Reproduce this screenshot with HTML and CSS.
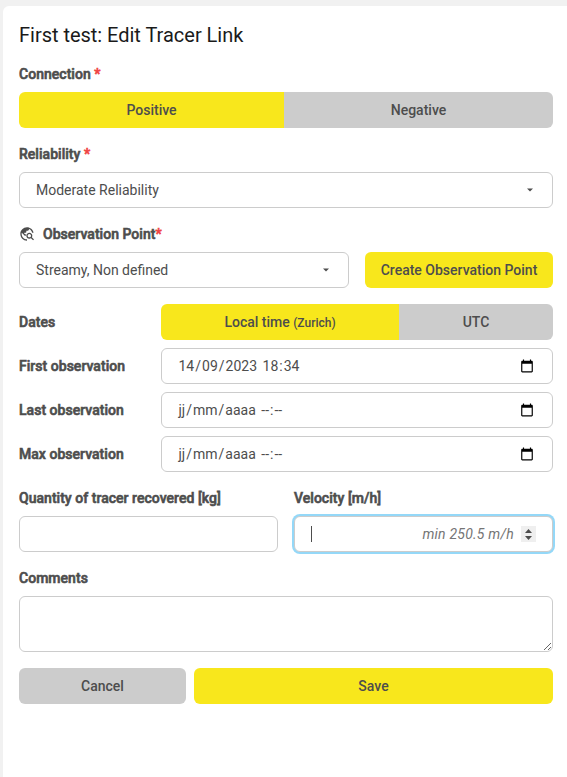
FILE: index.html
```html
<!DOCTYPE html>
<html lang="en">
<head>
<meta charset="utf-8">
<title>Edit Tracer Link</title>
<link rel="stylesheet" href="styles.css">
</head>
<body>
<svg class="sprite" aria-hidden="true">
  <symbol id="caret" viewBox="0 0 6 4"><path d="M0 .5h6L3 3.5z"/></symbol>
  <symbol id="calendar" viewBox="0 0 24 24"><path d="M20 3h-1V1h-2v2H7V1H5v2H4c-1.1 0-2 .9-2 2v16c0 1.1.9 2 2 2h16c1.1 0 2-.9 2-2V5c0-1.1-.9-2-2-2zm0 18H4V8h16v13z"/></symbol>
</svg>
<form class="panel">
  <h1 class="title">First test: Edit Tracer Link</h1>

  <div class="label">Connection <span class="required">*</span></div>
  <div class="toggle connection">
    <button type="button" class="button primary">Positive</button>
    <button type="button" class="button">Negative</button>
  </div>

  <div class="label">Reliability <span class="required">*</span></div>
  <div class="field select"><span>Moderate Reliability</span><svg class="caret"><use href="#caret"/></svg></div>

  <div class="label with-icon">
    <svg class="explore" viewBox="0 0 24 24"><path d="M19.3 16.9c.4-.7.7-1.5.7-2.4 0-2.5-2-4.5-4.5-4.5S11 12 11 14.5s2 4.5 4.5 4.5c.9 0 1.7-.3 2.4-.7l3.2 3.2 1.4-1.4-3.2-3.2zm-3.8.1c-1.4 0-2.5-1.1-2.5-2.5s1.1-2.5 2.5-2.5 2.5 1.1 2.5 2.5-1.1 2.5-2.5 2.5zM12 20v2C6.48 22 2 17.52 2 12S6.48 2 12 2c4.84 0 8.87 3.44 9.8 8h-2.07c-.64-2.46-2.4-4.47-4.73-5.41V5c0 1.1-.9 2-2 2h-2v2c0 .55-.45 1-1 1H8v2h2v3H9l-4.79-4.79C4.08 10.79 4 11.38 4 12c0 4.41 3.59 8 8 8z"/></svg>
    <span>Observation Point<span class="required">*</span></span>
  </div>
  <div class="point-row">
    <div class="field select"><span>Streamy, Non defined</span><svg class="caret"><use href="#caret"/></svg></div>
    <button type="button" class="button primary">Create Observation Point</button>
  </div>

  <div class="dates">
    <div class="label">Dates</div>
    <div class="toggle timezone">
      <button type="button" class="button primary">Local time <small>(Zurich)</small></button>
      <button type="button" class="button">UTC</button>
    </div>
    <div class="label">First observation</div>
    <div class="field date"><span><i>14</i>/<i>09</i>/<i>2023</i> <i>18</i>:<i>34</i></span><svg class="calendar"><use href="#calendar"/></svg></div>
    <div class="label">Last observation</div>
    <div class="field date"><span><i>jj</i>/<i>mm</i>/<i>aaaa</i> <i>--</i>:<i>--</i></span><svg class="calendar"><use href="#calendar"/></svg></div>
    <div class="label">Max observation</div>
    <div class="field date"><span><i>jj</i>/<i>mm</i>/<i>aaaa</i> <i>--</i>:<i>--</i></span><svg class="calendar"><use href="#calendar"/></svg></div>
  </div>

  <div class="measures">
    <div>
      <div class="label">Quantity of tracer recovered [kg]</div>
      <div class="field"></div>
    </div>
    <div>
      <div class="label">Velocity [m/h]</div>
      <div class="field focused">
        <span class="cursor"></span>
        <span class="hint">min 250.5 m/h</span>
        <svg class="spinner" viewBox="0 0 15 16"><path d="M4 7l3.5-4L11 7zM4 10h7l-3.5 4z"/></svg>
      </div>
    </div>
  </div>

  <div class="label">Comments</div>
  <textarea class="field comments"></textarea>

  <div class="actions">
    <button type="button" class="button">Cancel</button>
    <button type="button" class="button primary">Save</button>
  </div>
</form>
</body>
</html>
```
FILE: styles.css
```css
* { box-sizing: border-box; }
body {
  margin: 0;
  padding: 6px 0 0 3px;
  height: 777px;
  overflow: hidden;
  background: #f1f1f1;
  color: #4d4d4d;
  font: 14px/20px Roboto, sans-serif;
}
.sprite { display: none; }
.panel {
  height: 780px;
  padding: 16px 14px 0 16px;
  background: #fff;
  border-radius: 6px 0 0 0;
}
.title {
  margin: 0 0 16px;
  color: #1a1a1a;
  font-size: 20px;
  font-weight: 400;
  line-height: 26px;
  letter-spacing: -0.02px;
}
.label {
  height: 20px;
  margin-bottom: 8px;
  font-weight: 500;
  letter-spacing: 0.03px;
  -webkit-text-stroke: 0.6px currentColor;
}
.required { color: #f04343; }
.with-icon { display: flex; align-items: center; gap: 8px; }
.explore { width: 16px; height: 16px; fill: #4d4d4d; }
.button {
  height: 36px;
  padding: 0;
  border: 0;
  border-radius: 6px;
  background: #ccc;
  color: #4d4d4d;
  font: 500 14px/20px Roboto, sans-serif;
}
.primary { background: #f8e71c; }
.button small { font-size: 12px; }
.toggle { display: grid; border-radius: 6px; overflow: hidden; }
.toggle .button { border-radius: 0; }
.connection { grid-template-columns: 265px 1fr; margin-bottom: 16px; }
.timezone { grid-template-columns: 238px 1fr; }
.field {
  display: flex;
  align-items: center;
  justify-content: space-between;
  width: 100%;
  height: 36px;
  padding: 0 16px;
  border: 1px solid #ccc;
  border-radius: 6px;
  background: #fff;
}
.select { margin-bottom: 16px; padding-right: 19px; }
.caret { width: 6px; height: 4px; fill: #4d4d4d; }
.point-row { display: grid; grid-template-columns: 330px 1fr; gap: 16px; }
.dates {
  display: grid;
  grid-template-columns: 142px 1fr;
  gap: 8px 0;
  align-items: center;
  margin-bottom: 16px;
}
.dates .label { margin: 0; }
.date { padding: 0 18px 0 15.5px; }
.date i { padding: 0 1px; font-style: normal; }
.calendar { width: 14px; height: 14px; fill: #000; }
.measures { display: grid; grid-template-columns: 1fr 1fr; gap: 16px; margin-bottom: 16px; }
.focused { box-shadow: 0 0 0 2px #94d8f8; }
.cursor { width: 1px; height: 16px; background: #4d4d4d; }
.hint { margin-left: auto; color: #757575; font-style: italic; letter-spacing: 0.22px; }
.spinner { width: 15px; height: 16px; margin-left: 7px; background: #efefef; fill: #4d4d4d; }
.comments { display: block; height: 56px; margin-bottom: 16px; resize: vertical; }
.actions { display: grid; grid-template-columns: 167px 1fr; gap: 8px; }
```
